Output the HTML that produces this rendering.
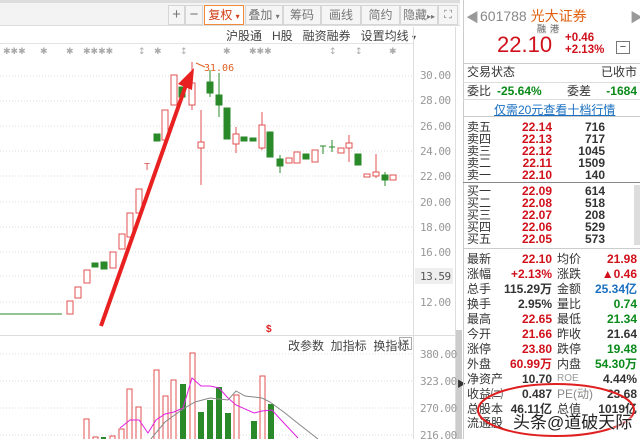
<!DOCTYPE html>
<html><head><meta charset="utf-8"><style>
*{margin:0;padding:0;box-sizing:border-box}
body{width:640px;height:439px;overflow:hidden;background:#fff;font-family:"Liberation Sans","Noto Sans CJK SC",sans-serif;position:relative;font-size:12px;color:#333}
.a{position:absolute;white-space:nowrap}
.btn{position:absolute;top:5px;height:20px;border:1px solid #d6d6d6;background:#f5f5f5;color:#777;font-size:12px;line-height:18px;text-align:center}
.r{color:#d0101a}.g{color:#0a8a1a}.b{color:#1a6fc0}
.row{position:absolute;left:467px;width:172px;height:14px;font-size:12px;line-height:14px}
.row span{position:absolute}
.ax{position:absolute;left:420px;font-size:11px;color:#999;font-family:"DejaVu Sans Mono","Liberation Mono",monospace;letter-spacing:-0.5px}
</style></head><body>
<div class="a" style="left:0;top:0;width:460px;height:3px;background:#ddd"></div>
<div class="a" style="left:0;top:3px;width:460px;height:23px;background:#f3f3f3;border-bottom:1px solid #ddd"></div>
<div class="btn" style="left:168px;width:17px;font-size:15px">+</div>
<div class="btn" style="left:185px;width:18px;font-size:15px">−</div>
<div class="btn" style="left:204px;width:40px;border-color:#f08a3a;background:#fff;color:#d0401a">复权 <span style="font-size:8px">▾</span></div>
<div class="btn" style="left:245px;width:38px">叠加 <span style="font-size:8px">▾</span></div>
<div class="btn" style="left:283px;width:38px">筹码</div>
<div class="btn" style="left:321px;width:40px">画线</div>
<div class="btn" style="left:361px;width:39px">简约</div>
<div class="btn" style="left:400px;width:38px">隐藏<span style="font-size:8px">▸▸</span></div>
<div class="btn" style="left:438px;width:20px;font-size:11px">⛶</div>
<div class="a" style="left:226px;top:27px;font-size:12px;color:#444">沪股通 &nbsp; H股 &nbsp; 融资融券 &nbsp; 设置均线 <span style="font-size:8px">▾</span></div>
<div class="a" style="left:0;top:43px;width:413px;height:1px;background:#e4e4e4"></div>
<div class="a" style="left:413px;top:27px;width:1px;height:412px;background:#ddd"></div>
<div class="a" style="left:455px;top:27px;width:1px;height:412px;background:#ddd"></div>
<div class="a" style="left:456px;top:330px;width:6px;height:109px;background:#ccc"></div>
<div class="a" style="left:457px;top:377px;font-size:9px;color:#333">▶</div>
<div class="a" style="left:0;top:335px;width:455px;height:1px;background:#ddd"></div>
<div class="ax" style="top:69px">30.00</div><div class="ax" style="top:94px">28.00</div><div class="ax" style="top:120px">26.00</div><div class="ax" style="top:145px">24.00</div><div class="ax" style="top:170px">22.00</div><div class="ax" style="top:196px">20.00</div><div class="ax" style="top:221px">18.00</div><div class="ax" style="top:246px">16.00</div>
<div class="a" style="left:415px;top:268px;width:38px;height:16px;background:#eee"></div><div class="ax" style="top:270px;color:#555">13.59</div>
<div class="ax" style="top:296px">12.00</div>
<div class="ax" style="top:348px">380.00</div><div class="ax" style="top:375px">323.00</div><div class="ax" style="top:402px">270.00</div><div class="ax" style="top:429px">216.00</div>
<div class="a" style="left:288px;top:337px;font-size:12px;color:#444">改参数 &nbsp;加指标 &nbsp;换指标</div>
<div class="a" style="left:399px;top:337px;width:13px;height:13px;border:1px solid #aaa;font-size:10px;line-height:11px;text-align:center;color:#666">✕</div>
<svg class="a" style="left:0;top:0" width="455" height="439">
<g stroke="#ddd" stroke-dasharray="1,2">
<line x1="0" y1="76" x2="412" y2="76"/><line x1="0" y1="101" x2="412" y2="101"/><line x1="0" y1="126" x2="412" y2="126"/><line x1="0" y1="151" x2="412" y2="151"/><line x1="0" y1="176" x2="412" y2="176"/><line x1="0" y1="202" x2="412" y2="202"/><line x1="0" y1="227" x2="412" y2="227"/><line x1="0" y1="252" x2="412" y2="252"/><line x1="0" y1="276" x2="412" y2="276"/><line x1="0" y1="302" x2="412" y2="302"/>
<line x1="0" y1="354" x2="412" y2="354"/><line x1="0" y1="381" x2="412" y2="381"/><line x1="0" y1="408" x2="412" y2="408"/><line x1="0" y1="435" x2="412" y2="435"/>
</g>
<g fill="#aaa" font-size="9" font-family="DejaVu Sans">
<text x="3" y="54">✱✱✱</text><text x="40" y="54">✱</text><text x="66" y="54">✱</text><text x="83" y="54">✱✱✱✱</text><text x="138" y="54">↕</text><text x="154" y="54">✱</text><text x="180" y="54">↕</text><text x="223" y="54">✱</text><text x="249" y="54">✱✱✱</text><text x="329" y="54">↕</text><text x="355" y="54">↕</text><text x="389" y="54">✱</text>
</g>
<g stroke-width="1">
<g stroke="#2a8a2a" fill="#2a8a2a"><line x1="0" y1="314" x2="62" y2="314"/></g>
<g stroke="#e05050" fill="#fff">
<rect x="67" y="301" width="6" height="13"/><rect x="75" y="287" width="6" height="11"/><rect x="84" y="270" width="6" height="13"/><rect x="110" y="252" width="6" height="16"/><rect x="119" y="234" width="6" height="15"/><rect x="127" y="213" width="6" height="24"/><rect x="136" y="189" width="6" height="24"/><rect x="162" y="110" width="6" height="30"/><rect x="171" y="75" width="6" height="30"/>
<line x1="192" y1="62" x2="192" y2="110"/><rect x="189" y="83" width="6" height="22"/><line x1="201" y1="110" x2="201" y2="185"/><rect x="198" y="142" width="6" height="6"/>
<line x1="236" y1="127" x2="236" y2="153"/><rect x="233" y="134" width="6" height="10"/><line x1="262" y1="112" x2="262" y2="150"/><rect x="259" y="125" width="6" height="23"/>
<rect x="286" y="158" width="6" height="5"/><rect x="294" y="152" width="6" height="11"/><rect x="312" y="150" width="6" height="12"/><rect x="338" y="148" width="6" height="5"/><line x1="349" y1="135" x2="349" y2="162"/><rect x="346" y="143" width="6" height="5"/><rect x="364" y="174" width="6" height="3"/><line x1="376" y1="154" x2="376" y2="178"/><rect x="373" y="172" width="6" height="4"/><rect x="390" y="175" width="6" height="5"/>
</g>
<g stroke="#2a8a2a" fill="#2a8a2a">
<rect x="92" y="263" width="6" height="4"/><rect x="101" y="262" width="6" height="7"/><rect x="154" y="134" width="6" height="7"/><rect x="179" y="87" width="6" height="10"/>
<line x1="210" y1="70" x2="210" y2="97"/><rect x="207" y="82" width="6" height="11"/><line x1="219" y1="73" x2="219" y2="117"/><rect x="216" y="95" width="6" height="10"/><rect x="224" y="108" width="6" height="31"/>
<rect x="241" y="137" width="6" height="4"/><rect x="250" y="138" width="6" height="3"/><rect x="267" y="132" width="6" height="25"/><line x1="280" y1="155" x2="280" y2="173"/><rect x="277" y="159" width="6" height="7"/><rect x="303" y="154" width="6" height="5"/><line x1="323" y1="146" x2="323" y2="154"/><line x1="320" y1="146" x2="326" y2="146"/><line x1="332" y1="140" x2="332" y2="152"/><line x1="329" y1="147" x2="335" y2="147"/><rect x="355" y="154" width="6" height="11"/><line x1="385" y1="172" x2="385" y2="186"/><rect x="382" y="175" width="6" height="5"/>
</g>
</g>
<text x="144" y="170" fill="#e05050" font-size="10">T</text>
<text x="204" y="71" fill="#e06020" font-size="10" font-family="DejaVu Sans Mono">31.06</text>
<line x1="196" y1="63" x2="205" y2="67" stroke="#e06020"/>
<line x1="101" y1="326" x2="186" y2="85" stroke="#e82020" stroke-width="4"/>
<polygon points="194,68 178,84 192,90" fill="#e82020"/>
<text x="266" y="332" fill="#e02020" font-size="10" font-weight="bold">$</text>
<g stroke="#e05050" fill="#fff">
<rect x="84" y="419" width="5" height="25"/><rect x="93" y="437" width="5" height="9"/><rect x="110" y="436" width="5" height="9"/><rect x="119" y="429" width="5" height="15"/><rect x="127" y="389" width="5" height="55"/><rect x="136" y="407" width="5" height="37"/><rect x="154" y="370" width="5" height="74"/><rect x="163" y="396" width="5" height="48"/><rect x="171" y="380" width="5" height="64"/><rect x="190" y="353" width="5" height="91"/><rect x="234" y="395" width="5" height="49"/><rect x="260" y="376" width="5" height="68"/>
</g>
<g fill="#2a8a2a"><rect x="101" y="437" width="5" height="5"/><rect x="180" y="384" width="6" height="60"/><rect x="198" y="412" width="6" height="30"/><rect x="207" y="400" width="6" height="40"/><rect x="216" y="387" width="6" height="55"/><rect x="225" y="413" width="6" height="30"/><rect x="251" y="421" width="6" height="20"/><rect x="268" y="404" width="6" height="36"/></g>
<polyline fill="none" stroke="#e020e0" points="120,428 130,420 139,420 148,433 156,420 165,414 174,412 183,408 192,378 201,386 210,386 219,388 228,398 236,405 254,413 262,411 272,410 282,421 298,438" />
<polyline fill="none" stroke="#888" points="150,440 165,422 183,409 195,402 210,398 228,400 236,391 245,396 262,398 270,402 285,413 300,425 318,439" />
</svg>
<div class="a" style="left:463px;top:0;width:1px;height:439px;background:#ccc"></div>
<div class="a" style="left:466px;top:7px;font-size:13px;color:#999">◀</div>
<div class="a" style="left:630px;top:7px;font-size:13px;color:#999">▶</div>
<div class="a" style="left:480px;top:6px;font-size:14px;color:#888">601788 <span style="color:#e06010">光大证券</span></div>
<div class="a" style="left:537px;top:24px;font-size:9px;color:#666;background:#eee;line-height:10px">融</div><div class="a" style="left:550px;top:24px;font-size:9px;color:#666;background:#eee;line-height:10px">港</div>
<div class="a r" style="left:497px;top:34px;font-size:22px;line-height:22px">22.10</div>
<div class="a r" style="left:565px;top:32px;font-size:11.5px;font-weight:bold;line-height:12px">+0.46<br>+2.13%</div>
<div class="a" style="left:616px;top:41px;width:14px;height:13px;border:1px solid #777;font-size:11px;line-height:10px;text-align:center">−</div>
<div class="a" style="left:463px;top:63px;width:177px;height:1px;background:#ccc"></div>
<div class="row" style="top:65px"><span style="left:0">交易状态</span><span style="right:2px">已收市</span></div>
<div class="a" style="left:463px;top:82px;width:177px;height:1px;background:#ddd"></div>
<div class="row" style="top:84px"><span style="left:0">委比</span><span class="g" style="left:30px;font-weight:bold">-25.64%</span><span style="left:100px">委差</span><span class="g" style="right:2px;font-weight:bold">-1684</span></div>
<div class="a" style="left:463px;top:99px;width:177px;height:1px;background:#ddd"></div>
<div class="a b" style="left:494px;top:101px;font-size:12px;text-decoration:underline">仅需20元查看十档行情</div>
<div class="a" style="left:463px;top:116px;width:177px;height:1px;background:#ccc"></div>
<div style="position:absolute;left:0;top:0;font-weight:bold">
<div class="row" style="top:120px"><span style="left:0;font-weight:normal">卖五</span><span class="r" style="right:87px">22.14</span><span style="right:34px">716</span></div>
<div class="row" style="top:132px"><span style="left:0;font-weight:normal">卖四</span><span class="r" style="right:87px">22.13</span><span style="right:34px">717</span></div>
<div class="row" style="top:144px"><span style="left:0;font-weight:normal">卖三</span><span class="r" style="right:87px">22.12</span><span style="right:34px">1045</span></div>
<div class="row" style="top:156px"><span style="left:0;font-weight:normal">卖二</span><span class="r" style="right:87px">22.11</span><span style="right:34px">1509</span></div>
<div class="row" style="top:168px"><span style="left:0;font-weight:normal">卖一</span><span class="r" style="right:87px">22.10</span><span style="right:34px">140</span></div>
<div class="row" style="top:184px"><span style="left:0;font-weight:normal">买一</span><span class="r" style="right:87px">22.09</span><span style="right:34px">614</span></div>
<div class="row" style="top:196px"><span style="left:0;font-weight:normal">买二</span><span class="r" style="right:87px">22.08</span><span style="right:34px">518</span></div>
<div class="row" style="top:208px"><span style="left:0;font-weight:normal">买三</span><span class="r" style="right:87px">22.07</span><span style="right:34px">208</span></div>
<div class="row" style="top:220px"><span style="left:0;font-weight:normal">买四</span><span class="r" style="right:87px">22.06</span><span style="right:34px">529</span></div>
<div class="row" style="top:232px"><span style="left:0;font-weight:normal">买五</span><span class="r" style="right:87px">22.05</span><span style="right:34px">573</span></div>
</div>
<div class="a" style="left:463px;top:182px;width:177px;height:1px;background:#888"></div>
<div class="a" style="left:634px;top:185px;width:6px;height:60px;background:#ddd"></div>
<div class="a" style="left:463px;top:248px;width:177px;height:1px;background:#ccc"></div>
<div style="position:absolute;left:0;top:0;font-weight:bold">
<div class="row" style="top:252px"><span style="left:0;font-weight:normal">最新</span><span class="r" style="right:87px">22.10</span><span style="left:90px;font-weight:normal">均价</span><span class="r" style="right:2px">21.98</span></div>
<div class="row" style="top:267px"><span style="left:0;font-weight:normal">涨幅</span><span class="r" style="right:87px">+2.13%</span><span style="left:90px;font-weight:normal">涨跌</span><span class="r" style="right:2px">▲0.46</span></div>
<div class="row" style="top:282px"><span style="left:0;font-weight:normal">总手</span><span style="right:87px">115.29万</span><span style="left:90px;font-weight:normal">金额</span><span class="b" style="right:2px">25.34亿</span></div>
<div class="row" style="top:297px"><span style="left:0;font-weight:normal">换手</span><span style="right:87px">2.95%</span><span style="left:90px;font-weight:normal">量比</span><span class="g" style="right:2px">0.74</span></div>
<div class="row" style="top:312px"><span style="left:0;font-weight:normal">最高</span><span class="r" style="right:87px">22.65</span><span style="left:90px;font-weight:normal">最低</span><span class="g" style="right:2px">21.34</span></div>
<div class="row" style="top:327px"><span style="left:0;font-weight:normal">今开</span><span class="r" style="right:87px">21.66</span><span style="left:90px;font-weight:normal">昨收</span><span style="right:2px">21.64</span></div>
<div class="row" style="top:342px"><span style="left:0;font-weight:normal">涨停</span><span class="r" style="right:87px">23.80</span><span style="left:90px;font-weight:normal">跌停</span><span class="g" style="right:2px">19.48</span></div>
<div class="row" style="top:357px"><span style="left:0;font-weight:normal">外盘</span><span class="r" style="right:87px">60.99万</span><span style="left:90px;font-weight:normal">内盘</span><span class="g" style="right:2px">54.30万</span></div>
<div class="row" style="top:372px"><span style="left:0;font-weight:normal">净资产</span><span style="right:87px">10.70</span><span style="left:90px;font-weight:normal;font-size:10px;color:#999">ROE</span><span style="right:2px">4.44%</span></div>
<div class="row" style="top:387px"><span style="left:0;font-weight:normal">收益㈡</span><span style="right:87px">0.487</span><span style="left:90px;font-weight:normal;color:#888">PE(动)</span><span style="right:2px">23.68</span></div>
<div class="row" style="top:402px"><span style="left:0;font-weight:normal">总股本</span><span style="right:87px">46.11亿</span><span style="left:90px;font-weight:normal">总值</span><span style="right:2px">1019亿</span></div>
<div class="row" style="top:416px"><span style="left:0;font-weight:normal">流通股</span></div>
</div>
<svg class="a" style="left:463px;top:370px" width="177" height="69"><ellipse cx="93" cy="40" rx="78" ry="26" fill="none" stroke="#e02020" stroke-width="2"/></svg>
<div class="a" style="left:513px;top:408px;font-size:17px;color:#222;text-shadow:0 0 2px #fff,0 0 2px #fff">头条@道破天际</div>
</body></html>
